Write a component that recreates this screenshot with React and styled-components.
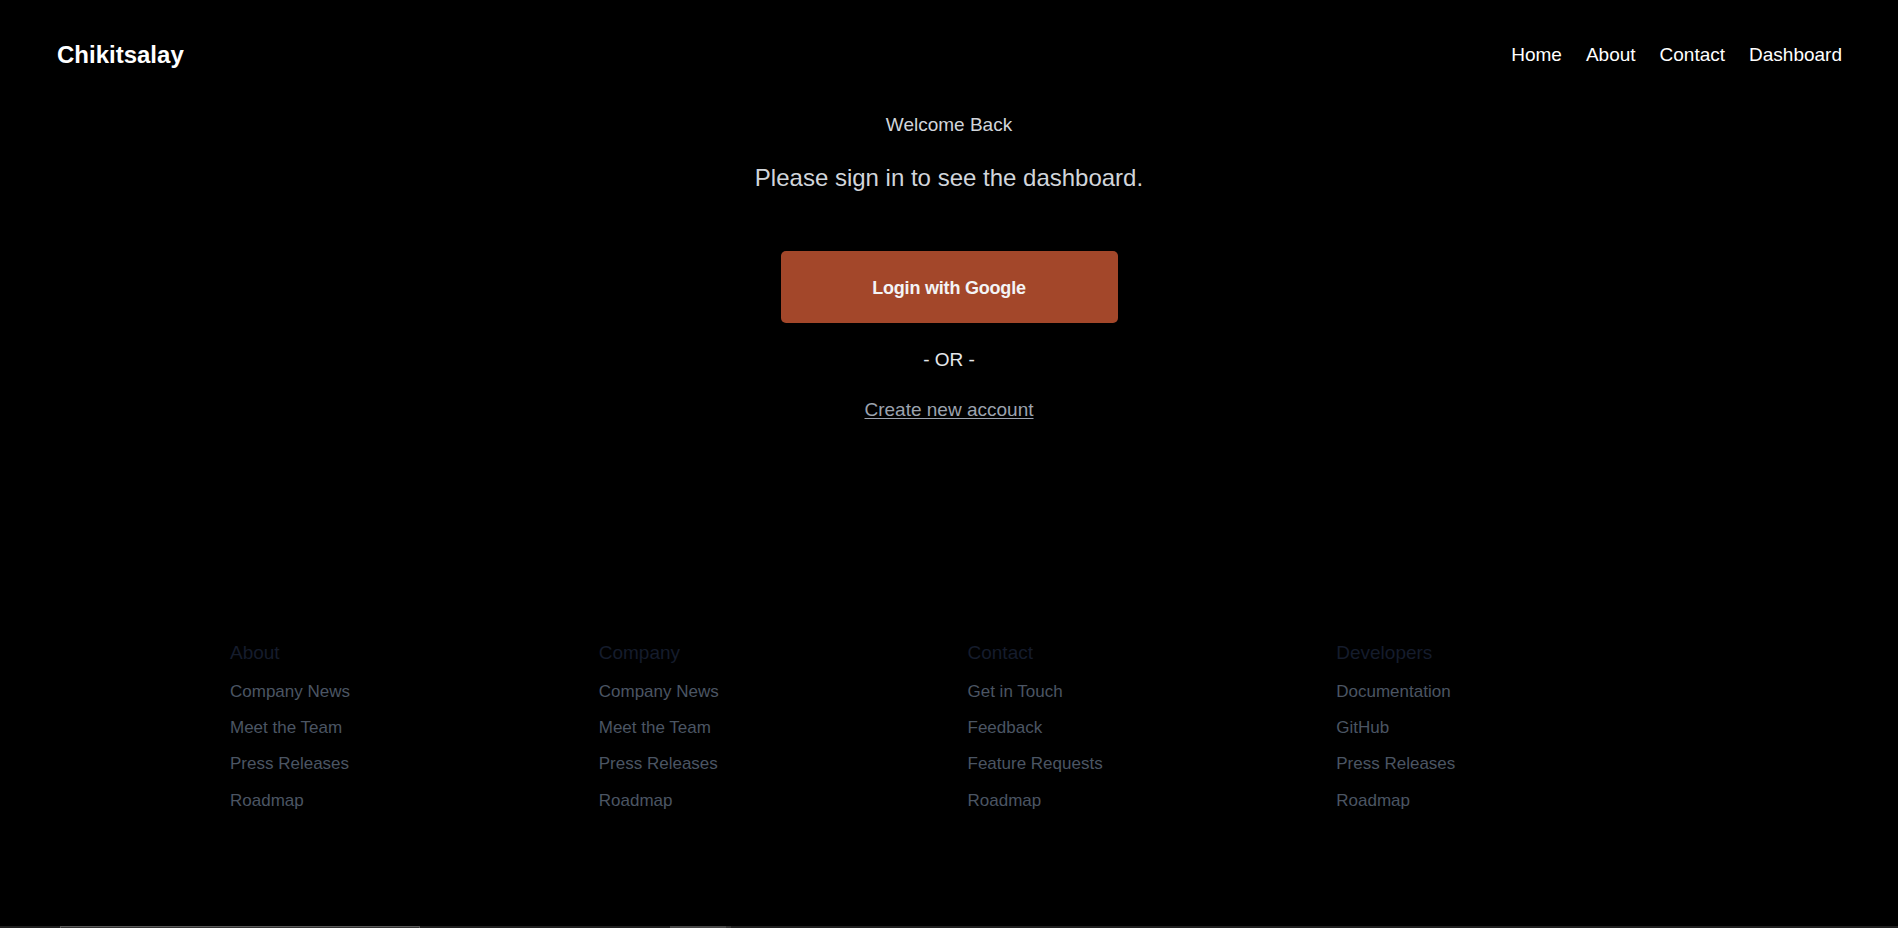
import styled, { createGlobalStyle } from "styled-components"

const GlobalStyle = createGlobalStyle`
  * {
    box-sizing: border-box;
  }
  body {
    margin: 0;
    background: #000;
    font-family: "Liberation Sans", Arial, sans-serif;
  }
`

const footerColumns = [
  { title: "About", links: ["Company News", "Meet the Team", "Press Releases", "Roadmap"] },
  { title: "Company", links: ["Company News", "Meet the Team", "Press Releases", "Roadmap"] },
  { title: "Contact", links: ["Get in Touch", "Feedback", "Feature Requests", "Roadmap"] },
  { title: "Developers", links: ["Documentation", "GitHub", "Press Releases", "Roadmap"] },
]

const navLinks = ["Home", "About", "Contact", "Dashboard"]

const App = () => {
  return (
    <Page>
      <GlobalStyle />
      <Header>
        <Logo href="#">Chikitsalay</Logo>
        <Nav>
          {navLinks.map((link) => (
            <NavLink key={link} href="#">
              {link}
            </NavLink>
          ))}
        </Nav>
      </Header>

      <Main>
        <Welcome>Welcome Back</Welcome>
        <Prompt>Please sign in to see the dashboard.</Prompt>
        <GoogleButton type="button">Login with Google</GoogleButton>
        <Divider>- OR -</Divider>
        <CreateLink href="#">Create new account</CreateLink>
      </Main>

      <Footer>
        {footerColumns.map((col) => (
          <Column key={col.title}>
            <ColumnTitle>{col.title}</ColumnTitle>
            {col.links.map((link) => (
              <FooterLink key={link} href="#">
                {link}
              </FooterLink>
            ))}
          </Column>
        ))}
      </Footer>

      <BottomBar>
        <EmailBox />
        <SubscribeBlock />
      </BottomBar>
    </Page>
  )
}

const Page = styled.div`
  min-height: 100vh;
  background: #000;
  display: flex;
  flex-direction: column;
`

const Header = styled.header`
  height: 110px;
  padding: 0 56px 0 57px;
  display: flex;
  align-items: center;
  justify-content: space-between;
`

const Logo = styled.a`
  color: #fff;
  font-size: 24px;
  line-height: 30px;
  font-weight: 700;
  text-decoration: none;
`

const Nav = styled.nav`
  display: flex;
  align-items: center;
  gap: 24px;
`

const NavLink = styled.a`
  color: #fff;
  font-size: 19px;
  line-height: 24px;
  text-decoration: none;
`

const Main = styled.main`
  display: flex;
  flex-direction: column;
  align-items: center;
  padding-top: 3.4px;
`

const Welcome = styled.p`
  margin: 0;
  color: #d1d5db;
  font-size: 19px;
  line-height: 24px;
`

const Prompt = styled.h2`
  margin: 25.3px 0 0;
  color: #d1d5db;
  font-size: 24px;
  line-height: 30px;
  font-weight: 400;
`

const GoogleButton = styled.button`
  margin-top: 58.3px;
  width: 337px;
  height: 72px;
  padding: 4px 0 0;
  border: none;
  border-radius: 5px;
  background: #a3472a;
  color: #f3f4f6;
  font-family: "Liberation Sans", Arial, sans-serif;
  font-size: 18px;
  font-weight: 700;
  letter-spacing: -0.2px;
  cursor: pointer;
`

const Divider = styled.p`
  margin: 25.3px 0 0;
  color: #e5e7eb;
  font-size: 19px;
  line-height: 24px;
`

const CreateLink = styled.a`
  margin-top: 25.6px;
  color: #9ca3af;
  font-size: 19px;
  line-height: 24px;
  text-decoration: underline;
  text-underline-offset: 2px;
`

const Footer = styled.footer`
  margin-top: 219px;
  padding-left: 230px;
  display: grid;
  grid-template-columns: repeat(4, 336.75px);
  column-gap: 32px;
`

const Column = styled.div`
  display: flex;
  flex-direction: column;
  align-items: flex-start;
  gap: 16.3px;
`

const ColumnTitle = styled.h3`
  margin: 0 0 0.6px;
  color: #151c2c;
  font-size: 19px;
  line-height: 24px;
  font-weight: 400;
`

const FooterLink = styled.a`
  color: #4b5563;
  font-size: 17px;
  line-height: 20px;
  text-decoration: none;
`

const BottomBar = styled.div`
  margin-top: 115px;
  height: 64px;
  background: #202020;
  display: flex;
  align-items: flex-start;
  padding-left: 60px;
`

const EmailBox = styled.div`
  width: 360px;
  height: 40px;
  background: #333;
  border: 1px solid #5a5a5a;
`

const SubscribeBlock = styled.div`
  margin-left: 250px;
  width: 61px;
  height: 40px;
  background: #474747;
  border-right: 5px solid #333;
`

export default App
